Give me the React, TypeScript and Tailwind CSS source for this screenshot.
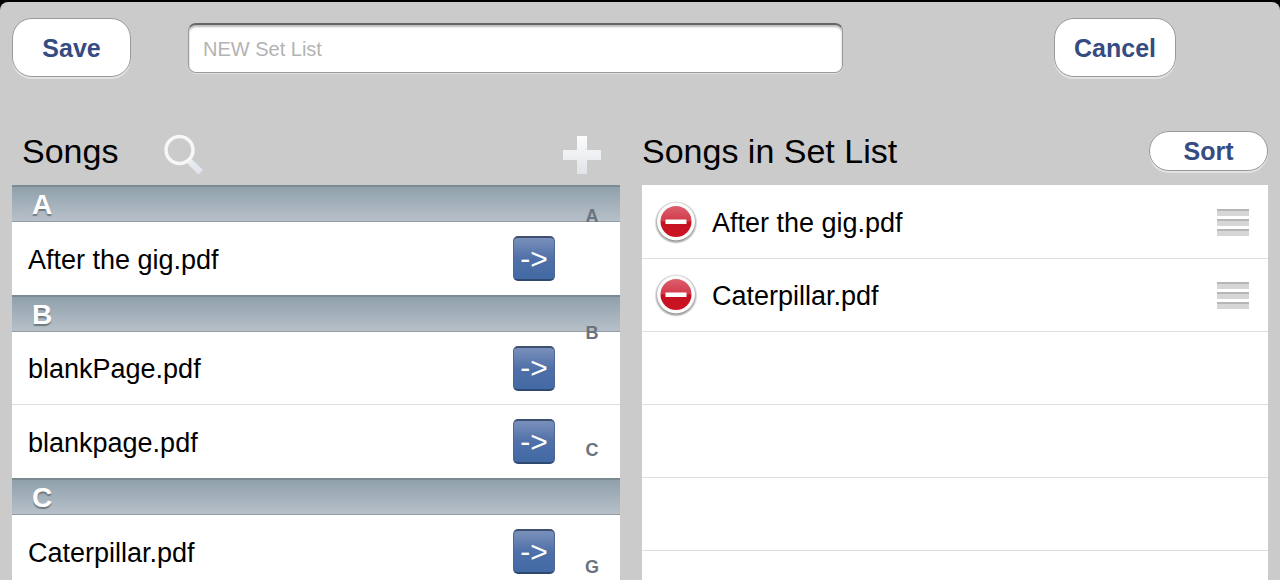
import { useState } from 'react'

interface Section {
  letter: string
  songs: string[]
}

const SECTIONS: Section[] = [
  { letter: 'A', songs: ['After the gig.pdf'] },
  { letter: 'B', songs: ['blankPage.pdf', 'blankpage.pdf'] },
  { letter: 'C', songs: ['Caterpillar.pdf'] },
]

const INDEX = ['A', 'B', 'C', 'G']

const MIN_ROWS = 6

const buttonClass =
  'border border-[#999] bg-white text-[25px] leading-7 font-bold text-[#364b82] shadow-[0_2px_0_#e2e2e2]'

function SearchIcon() {
  return (
    <svg viewBox="0 0 40 40" className="size-10" fill="none" aria-hidden="true">
      <defs>
        <linearGradient id="handle" x1="0" y1="0" x2="1" y2="1">
          <stop offset="0" stopColor="#eceef2" />
          <stop offset="1" stopColor="#dfe2ee" />
        </linearGradient>
      </defs>
      <path d="M23 28 27.500 24 39 35 34.500 39.500z" fill="url(#handle)" />
      <circle cx="15.500" cy="15" r="13.500" stroke="#f7f7f7" strokeWidth="3.500" />
    </svg>
  )
}

function PlusIcon() {
  return (
    <svg viewBox="0 0 40 40" className="size-10" aria-hidden="true">
      <defs>
        <linearGradient id="plus" x1="0" y1="0" x2="0" y2="1">
          <stop offset="0" stopColor="#fcfcfc" />
          <stop offset="1" stopColor="#e0e3e8" />
        </linearGradient>
      </defs>
      <path d="M15 1h10v14h14v10H25v14H15V25H1V15h14z" fill="url(#plus)" />
    </svg>
  )
}

function RemoveIcon() {
  return (
    <svg viewBox="0 0 44 44" className="size-11" aria-hidden="true">
      <defs>
        <linearGradient id="remove" x1="0" y1="0" x2="0" y2="1">
          <stop offset="0" stopColor="#dc5f6c" />
          <stop offset="0.48" stopColor="#d23a4a" />
          <stop offset="0.52" stopColor="#c4111f" />
          <stop offset="1" stopColor="#cc1426" />
        </linearGradient>
        <radialGradient id="ring">
          <stop offset="0.84" stopColor="#8a8a8a" />
          <stop offset="1" stopColor="#8a8a8a" stopOpacity="0" />
        </radialGradient>
      </defs>
      <circle cx="22" cy="22.500" r="21.500" fill="url(#ring)" />
      <circle cx="22" cy="21.500" r="19" fill="#fbfbfb" />
      <circle cx="22" cy="21.500" r="15.500" fill="url(#remove)" />
      <rect x="11.500" y="19.500" width="21" height="4.500" fill="#fff" />
    </svg>
  )
}

function DragHandle() {
  return (
    <span className="flex flex-col gap-[3px]">
      {[0, 1, 2].map(i => (
        <span key={i} className="block h-[7px] w-8 border-t-2 border-[#b6b6b6] bg-[#d6d6d6]" />
      ))}
    </span>
  )
}

function SongLibrary({ onAdd }: { onAdd: (song: string) => void }) {
  return (
    <div className="relative bg-white">
      {SECTIONS.map(section => (
        <section key={section.letter}>
          <h3 className="flex h-[37px] items-center border-t-2 border-b border-t-[#7c8a93] border-b-[#939da4] bg-linear-to-b from-[#90a1ac] to-[#b7c0c9] pt-px pl-5 text-[28px] leading-8 font-bold text-white [text-shadow:0_2px_1px_#6f7a82]">
            {section.letter}
          </h3>
          <ul className="divide-y divide-[#dedede]">
            {section.songs.map(song => (
              <li key={song} className="flex h-[73px] items-center justify-between pr-[65px] pl-4">
                <span className="pt-0.5 text-[27px] leading-8">{song}</span>
                <button
                  type="button"
                  aria-label={`Add ${song}`}
                  onClick={() => onAdd(song)}
                  className="h-[45px] w-[42px] rounded-[5px] border border-t-2 border-b-2 border-x-[#4c6696] border-t-[#3e5070] border-b-[#30476f] bg-linear-to-b from-[#7a90bb] via-[#4f70a8] to-[#426aa5] text-[30px] leading-8 text-white"
                >
                  -&gt;
                </button>
              </li>
            ))}
          </ul>
        </section>
      ))}

      {/* Alphabet index floats over the rows */}
      <nav className="absolute top-[21px] right-0 flex w-14 flex-col gap-[97px]">
        {INDEX.map(letter => (
          <a key={letter} href={`#${letter}`} className="text-center text-lg leading-5 font-bold text-[#6a737d]">
            {letter}
          </a>
        ))}
      </nav>
    </div>
  )
}

export default function App() {
  const [name, setName] = useState('')
  const [setList, setSetList] = useState(['After the gig.pdf', 'Caterpillar.pdf'])

  function addSong(song: string) {
    setSetList(list => [...list, song])
  }

  function removeSong(index: number) {
    setSetList(list => list.filter((_, i) => i !== index))
  }

  const emptyRows = Math.max(0, MIN_ROWS - setList.length)

  return (
    <div className="h-screen overflow-hidden bg-black pt-0.5 font-['Liberation_Sans',Arial,sans-serif] text-black">
      <main className="min-h-full rounded-t-lg bg-[#cbcbcb] px-3 pt-4">
        <header className="flex items-center">
          <button type="button" className={`${buttonClass} h-[59px] w-[119px] rounded-[20px]`}>
            Save
          </button>
          <input
            type="text"
            aria-label="Set list name"
            placeholder="NEW Set List"
            value={name}
            onChange={e => setName(e.target.value)}
            className="ml-[57px] h-[50px] min-w-0 flex-1 rounded-lg border border-t-2 border-[#999] border-t-[#666] bg-white px-3.5 pt-0.5 text-xl shadow-[inset_0_2px_2px_#bbb,0_1px_0_#e2e2e2] placeholder:text-[#b3b3b3] focus:outline-none"
          />
          <button type="button" className={`${buttonClass} mr-[92px] ml-[211px] h-[59px] w-[122px] rounded-[20px]`}>
            Cancel
          </button>
        </header>

        <div className="mt-[54px] flex gap-[22px]">
          <div className="min-w-0 flex-[608]">
            <div className="mb-3.5 flex h-10 items-center pr-[18px] pl-2.5">
              <h2 className="w-[142px] text-[34px] leading-10">Songs</h2>
              <button type="button" aria-label="Search songs" className="mt-2">
                <SearchIcon />
              </button>
              <button type="button" aria-label="Add song" className="mt-2 ml-auto">
                <PlusIcon />
              </button>
            </div>
            <SongLibrary onAdd={addSong} />
          </div>

          <div className="min-w-0 flex-[626]">
            <div className="mb-3.5 flex h-10 items-center justify-between">
              <h2 className="text-[34px] leading-10">Songs in Set List</h2>
              <button type="button" className={`${buttonClass} h-10 w-[119px] rounded-full`}>
                Sort
              </button>
            </div>
            <ul className="divide-y divide-[#dedede] bg-white pt-px">
              {setList.map((song, i) => (
                <li key={i} className="flex h-[73px] items-center pr-[19px] pl-3">
                  <button type="button" aria-label={`Remove ${song}`} onClick={() => removeSong(i)}>
                    <RemoveIcon />
                  </button>
                  <span className="ml-3.5 pt-0.5 text-[27px] leading-8">{song}</span>
                  <button type="button" aria-label={`Move ${song}`} className="ml-auto">
                    <DragHandle />
                  </button>
                </li>
              ))}
              {Array.from({ length: emptyRows }, (_, i) => (
                <li key={`empty-${i}`} className="h-[73px]" />
              ))}
            </ul>
          </div>
        </div>
      </main>
    </div>
  )
}
